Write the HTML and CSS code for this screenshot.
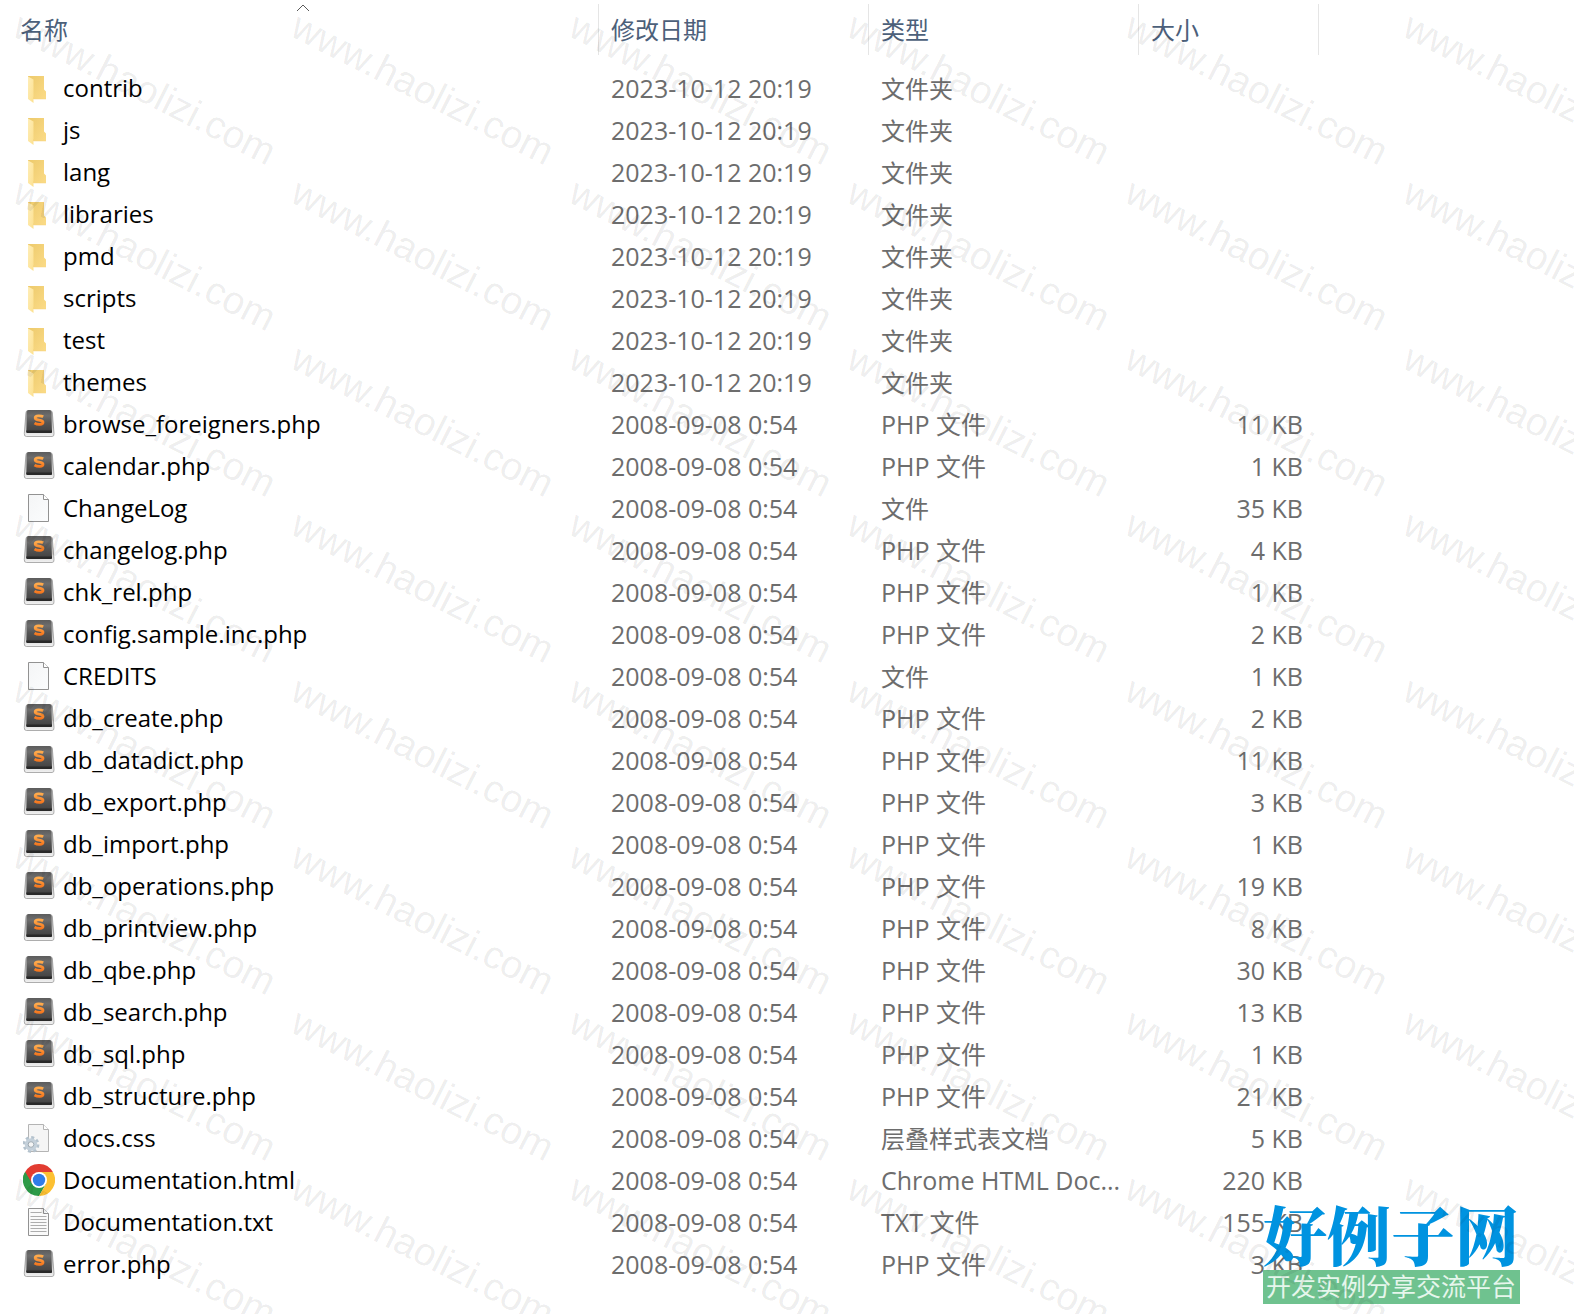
FILE: index.html
```html
<!DOCTYPE html>
<html lang="zh-CN">
<head>
<meta charset="utf-8">
<meta name="viewport" content="width=device-width, initial-scale=1">
<title>文件列表</title>
<link rel="stylesheet" href="styles.css">
</head>
<body>
<svg class="sprite" aria-hidden="true">
  <defs>
    <linearGradient id="folder-front" x1="0" y1="0" x2="1" y2="1"><stop offset="0" stop-color="#ffeeb8"/><stop offset="1" stop-color="#fce08f"/></linearGradient>
    <linearGradient id="folder-back" x1="0" y1="0" x2="1" y2="1"><stop offset="0" stop-color="#edca6c"/><stop offset="1" stop-color="#fbdb87"/></linearGradient>
    <linearGradient id="key-top" x1="0" y1="0" x2="0" y2="1"><stop offset="0" stop-color="#5c5c5c"/><stop offset="0.25" stop-color="#6d6d6d"/><stop offset="0.55" stop-color="#555"/><stop offset="1" stop-color="#404040"/></linearGradient>
    <linearGradient id="key-rim" x1="0" y1="0" x2="0" y2="1"><stop offset="0" stop-color="#8b8b8b"/><stop offset="1" stop-color="#f2f2f2"/></linearGradient>
    <linearGradient id="letter" x1="0" y1="0" x2="0" y2="1"><stop offset="0" stop-color="#ffac4d"/><stop offset="1" stop-color="#f5781f"/></linearGradient>
    <linearGradient id="paper" x1="0" y1="0" x2="1" y2="1"><stop offset="0" stop-color="#f4f5f6"/><stop offset="1" stop-color="#fbfcfd"/></linearGradient>
  </defs>
  <symbol id="folder" viewBox="0 0 32 32">
    <path d="M5 4h16v13.500l2 2V27H5z" fill="url(#folder-back)"/>
    <path d="M5 4.500 10.500 7.500V31L5 27z" fill="url(#folder-front)"/>
    <path d="M10.500 25v2H23" fill="none" stroke="#f4d37d" stroke-width="0.500"/>
  </symbol>
  <symbol id="php" viewBox="0 0 32 32">
    <path d="M5 2.500h22q2 0 2.300 2L31 25.500q.3 3-2 3H3.500q-2.500 0-2.200-3L3 4.500q.2-2 2-2z" fill="url(#key-rim)" stroke="#999" stroke-width="0.800"/>
    <path d="M5.500 2h21q1.500 0 1.700 1.800L29 23.500q0 1.500-1.500 1.500H5q-1.800 0-1.700-1.500L4 3.800Q4.200 2 5.500 2z" fill="url(#key-top)"/>
    <path d="M3.300 22.500H29v1.500q0 1-1.500 1H5q-1.700 0-1.700-1z" fill="#292929"/>
    <path d="M20.200 8.800c-2-1.200-8-1.800-8 1.100 0 3 7.800 1.300 7.800 4.300 0 2.900-5.500 2.700-8.500.9" fill="none" stroke="url(#letter)" stroke-width="2.800"/>
  </symbol>
  <symbol id="file" viewBox="0 0 32 32">
    <path d="M5.500 2.500h15l5 5v22h-20z" fill="url(#paper)" stroke="#929292"/>
    <path d="M20.500 2.500v5h5" fill="#fff" stroke="#929292"/>
  </symbol>
  <symbol id="txt" viewBox="0 0 32 32">
    <path d="M5.500 2.500h15l5 5v22h-20z" fill="#fafafa" stroke="#929292"/>
    <path d="M20.500 2.500v5h5" fill="#fff" stroke="#929292"/>
    <path d="M7.500 6.500h11M7.500 10.500h16M7.500 13.500h16M7.500 16.500h16M7.500 19.500h16M7.500 22.500h16M7.500 25.500h16" stroke="#adadad"/>
  </symbol>
  <symbol id="css" viewBox="0 0 32 32">
    <path d="M5.500 2.500h15l5 5v22h-20z" fill="#f5f5f5" stroke="#b4b4b4"/>
    <path d="M20.500 2.500v5h5" fill="#fff" stroke="#b4b4b4"/>
    <circle cx="8" cy="22.500" r="6.800" fill="none" stroke="#b4c2cd" stroke-width="3.200" stroke-dasharray="2.900 2.440"/>
    <circle cx="8" cy="22.500" r="4.600" fill="none" stroke="#c4d0da" stroke-width="3.400"/>
    <circle cx="8" cy="22.500" r="2.800" fill="#f5f5f5" stroke="#8d9aa5" stroke-width="0.800"/>
  </symbol>
  <symbol id="chrome" viewBox="0 0 32 32">
    <path d="M16 16 2.140 8A16 16 0 0 1 29.860 8z" fill="#e23c31"/>
    <path d="M2.140 8A16 16 0 0 0 16 32l7-12-7-4z" fill="#2c9a48"/>
    <path d="M29.860 8A16 16 0 0 1 16 32l7-12-7-12z" fill="#fcc032"/>
    <path d="M2.140 8 9.100 20 16 16V8z" fill="#e23c31"/>
    <path d="M2.140 8 9.100 20 4 24Q-3 16 2.140 8z" fill="#2c9a48"/>
    <circle cx="16" cy="16" r="8" fill="#fff"/>
    <circle cx="16" cy="16" r="6.200" fill="#2f7ce8"/>
  </symbol>
</svg>

<main class="explorer">
  <table class="files">
    <colgroup><col><col class="col-date"><col class="col-type"><col class="col-size"></colgroup>
    <thead>
      <tr>
        <th scope="col" aria-sort="ascending"><button class="sort sort-name" type="button">名称<svg class="caret" viewBox="0 0 14 8" aria-hidden="true"><path d="M1 7 7 1l6 6" fill="none" stroke="#5a5a5a"/></svg></button></th>
        <th scope="col"><button class="sort" type="button">修改日期</button></th>
        <th scope="col"><button class="sort" type="button">类型</button></th>
        <th scope="col"><button class="sort" type="button">大小</button></th>
      </tr>
    </thead>
    <tbody>
      <tr><td><span class="name"><svg class="icon"><use href="#folder"/></svg>contrib</span></td><td>2023-10-12 20:19</td><td class="type-zh">文件夹</td><td class="size"></td></tr>
      <tr><td><span class="name"><svg class="icon"><use href="#folder"/></svg>js</span></td><td>2023-10-12 20:19</td><td class="type-zh">文件夹</td><td class="size"></td></tr>
      <tr><td><span class="name"><svg class="icon"><use href="#folder"/></svg>lang</span></td><td>2023-10-12 20:19</td><td class="type-zh">文件夹</td><td class="size"></td></tr>
      <tr><td><span class="name"><svg class="icon"><use href="#folder"/></svg>libraries</span></td><td>2023-10-12 20:19</td><td class="type-zh">文件夹</td><td class="size"></td></tr>
      <tr><td><span class="name"><svg class="icon"><use href="#folder"/></svg>pmd</span></td><td>2023-10-12 20:19</td><td class="type-zh">文件夹</td><td class="size"></td></tr>
      <tr><td><span class="name"><svg class="icon"><use href="#folder"/></svg>scripts</span></td><td>2023-10-12 20:19</td><td class="type-zh">文件夹</td><td class="size"></td></tr>
      <tr><td><span class="name"><svg class="icon"><use href="#folder"/></svg>test</span></td><td>2023-10-12 20:19</td><td class="type-zh">文件夹</td><td class="size"></td></tr>
      <tr><td><span class="name"><svg class="icon"><use href="#folder"/></svg>themes</span></td><td>2023-10-12 20:19</td><td class="type-zh">文件夹</td><td class="size"></td></tr>
      <tr><td><span class="name"><svg class="icon"><use href="#php"/></svg>browse_foreigners.php</span></td><td>2008-09-08 0:54</td><td>PHP 文件</td><td class="size">11 KB</td></tr>
      <tr><td><span class="name"><svg class="icon"><use href="#php"/></svg>calendar.php</span></td><td>2008-09-08 0:54</td><td>PHP 文件</td><td class="size">1 KB</td></tr>
      <tr><td><span class="name"><svg class="icon"><use href="#file"/></svg>ChangeLog</span></td><td>2008-09-08 0:54</td><td class="type-zh">文件</td><td class="size">35 KB</td></tr>
      <tr><td><span class="name"><svg class="icon"><use href="#php"/></svg>changelog.php</span></td><td>2008-09-08 0:54</td><td>PHP 文件</td><td class="size">4 KB</td></tr>
      <tr><td><span class="name"><svg class="icon"><use href="#php"/></svg>chk_rel.php</span></td><td>2008-09-08 0:54</td><td>PHP 文件</td><td class="size">1 KB</td></tr>
      <tr><td><span class="name"><svg class="icon"><use href="#php"/></svg>config.sample.inc.php</span></td><td>2008-09-08 0:54</td><td>PHP 文件</td><td class="size">2 KB</td></tr>
      <tr><td><span class="name"><svg class="icon"><use href="#file"/></svg>CREDITS</span></td><td>2008-09-08 0:54</td><td class="type-zh">文件</td><td class="size">1 KB</td></tr>
      <tr><td><span class="name"><svg class="icon"><use href="#php"/></svg>db_create.php</span></td><td>2008-09-08 0:54</td><td>PHP 文件</td><td class="size">2 KB</td></tr>
      <tr><td><span class="name"><svg class="icon"><use href="#php"/></svg>db_datadict.php</span></td><td>2008-09-08 0:54</td><td>PHP 文件</td><td class="size">11 KB</td></tr>
      <tr><td><span class="name"><svg class="icon"><use href="#php"/></svg>db_export.php</span></td><td>2008-09-08 0:54</td><td>PHP 文件</td><td class="size">3 KB</td></tr>
      <tr><td><span class="name"><svg class="icon"><use href="#php"/></svg>db_import.php</span></td><td>2008-09-08 0:54</td><td>PHP 文件</td><td class="size">1 KB</td></tr>
      <tr><td><span class="name"><svg class="icon"><use href="#php"/></svg>db_operations.php</span></td><td>2008-09-08 0:54</td><td>PHP 文件</td><td class="size">19 KB</td></tr>
      <tr><td><span class="name"><svg class="icon"><use href="#php"/></svg>db_printview.php</span></td><td>2008-09-08 0:54</td><td>PHP 文件</td><td class="size">8 KB</td></tr>
      <tr><td><span class="name"><svg class="icon"><use href="#php"/></svg>db_qbe.php</span></td><td>2008-09-08 0:54</td><td>PHP 文件</td><td class="size">30 KB</td></tr>
      <tr><td><span class="name"><svg class="icon"><use href="#php"/></svg>db_search.php</span></td><td>2008-09-08 0:54</td><td>PHP 文件</td><td class="size">13 KB</td></tr>
      <tr><td><span class="name"><svg class="icon"><use href="#php"/></svg>db_sql.php</span></td><td>2008-09-08 0:54</td><td>PHP 文件</td><td class="size">1 KB</td></tr>
      <tr><td><span class="name"><svg class="icon"><use href="#php"/></svg>db_structure.php</span></td><td>2008-09-08 0:54</td><td>PHP 文件</td><td class="size">21 KB</td></tr>
      <tr><td><span class="name"><svg class="icon"><use href="#css"/></svg>docs.css</span></td><td>2008-09-08 0:54</td><td class="type-zh">层叠样式表文档</td><td class="size">5 KB</td></tr>
      <tr><td><span class="name"><svg class="icon"><use href="#chrome"/></svg>Documentation.html</span></td><td>2008-09-08 0:54</td><td>Chrome HTML Doc...</td><td class="size">220 KB</td></tr>
      <tr><td><span class="name"><svg class="icon"><use href="#txt"/></svg>Documentation.txt</span></td><td>2008-09-08 0:54</td><td>TXT 文件</td><td class="size">155 KB</td></tr>
      <tr><td><span class="name"><svg class="icon"><use href="#php"/></svg>error.php</span></td><td>2008-09-08 0:54</td><td>PHP 文件</td><td class="size">3 KB</td></tr>
    </tbody>
  </table>

  <div class="brand">
    <div class="brand-name">好例子网</div>
    <div class="brand-tagline">开发实例分享交流平台</div>
  </div>
  <div class="watermark" aria-hidden="true"></div>
</main>
<script src="watermark.js"></script>
</body>
</html>
```
FILE: styles.css
```css
* {
  box-sizing: border-box;
}

body {
  margin: 0;
  background: #fff;
  color: #000;
  font-family: "Open Sans", "Noto Sans CJK SC", sans-serif;
  font-size: 25px;
}

.sprite {
  position: absolute;
  width: 0;
  height: 0;
}

.explorer {
  position: relative;
  min-height: 100vh;
  overflow: hidden;
}

.files {
  width: calc(100% - 255px);
  border-collapse: collapse;
  table-layout: fixed;
}

.col-date,
.col-type {
  width: 270px;
}

.col-size {
  width: 180px;
}

th {
  height: 67px;
  padding: 4px 0 0;
  vertical-align: top;
}

.sort {
  display: block;
  position: relative;
  width: 100%;
  height: 51px;
  padding: 0 12px 2px;
  border: 0;
  border-right: 1px solid #e5e5e5;
  background: none;
  color: #4c607a;
  font: 24px/32px "Noto Sans CJK SC", sans-serif;
  text-align: left;
}

.sort-name {
  padding-left: 20px;
}

.caret {
  position: absolute;
  top: 0;
  left: calc(50% - 3px);
  width: 14px;
  height: 8px;
}

td {
  height: 42px;
  padding: 0 0 0 12px;
  color: #6d6d6d;
  line-height: 42px;
  white-space: nowrap;
}

td:first-child {
  padding-left: 23px;
  color: #000;
  font-size: 24px;
}

.name {
  display: flex;
  align-items: center;
  gap: 8px;
  height: 42px;
}

.icon {
  flex: none;
  width: 32px;
  height: 32px;
}

.type-zh {
  padding-top: 2px;
  font-size: 24px;
  line-height: 40px;
}

.size {
  padding: 0 16px 0 0;
  text-align: right;
}

.brand {
  position: absolute;
  right: 54px;
  bottom: 10px;
  width: 257px;
}

.brand-name {
  padding-bottom: 4px;
  color: #0093e0;
  font: 900 64px/68px "Noto Serif CJK SC", "Noto Sans CJK SC", serif;
  white-space: nowrap;
}

.brand-tagline {
  padding: 0 3px 4px;
  background: #6fc28f;
  color: #e6f6ec;
  font: 25px/30px "Noto Sans CJK SC", sans-serif;
  white-space: nowrap;
}

.watermark {
  display: grid;
  grid-template-columns: repeat(auto-fill, 278px);
  grid-auto-rows: 166px;
  position: absolute;
  top: 0;
  right: -278px;
  bottom: -166px;
  left: 0;
  overflow: hidden;
  color: rgba(0, 0, 0, 0.08);
  font: 39px/40px "Liberation Sans", Arial, sans-serif;
  pointer-events: none;
}

.watermark span {
  padding: 2px 0 0 10px;
  white-space: nowrap;
  transform: rotate(27deg);
  transform-origin: 10px 36px;
}
```
FILE: watermark.js
```js
const layer = document.querySelector(".watermark");
const columns = Math.floor(layer.offsetWidth / 278);
const rows = Math.ceil(layer.offsetHeight / 166);

for (let i = 0; i < columns * rows; i += 1) {
  const mark = document.createElement("span");
  mark.textContent = "www.haolizi.com";
  layer.append(mark);
}
```
